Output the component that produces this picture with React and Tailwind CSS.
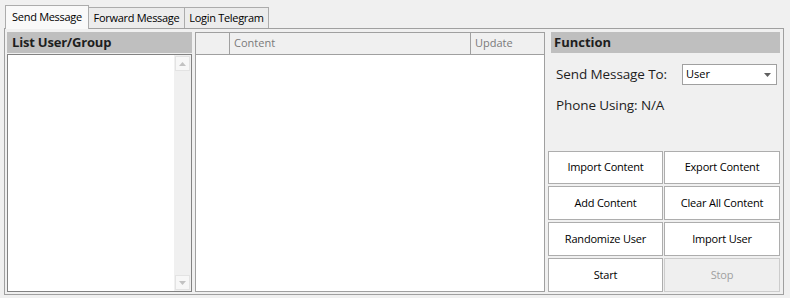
import React from "react";

const FONT = { fontFamily: '"Open Sans", "Noto Sans", sans-serif' };

function Btn({ children, disabled }) {
  return (
    <button
      disabled={disabled}
      className={
        disabled
          ? "border border-[#cccccc] bg-[#efefef] text-[#a0a0a0] text-[11px] tracking-[-0.2px]"
          : "border border-[#adadad] bg-white text-black text-[11px] tracking-[-0.2px]"
      }
    >
      {children}
    </button>
  );
}

function ScrollArrow({ up }) {
  return (
    <div className="h-[15px] w-[15px] border border-[#e3e3e3] bg-[#f7f7f7] flex items-center justify-center">
      <svg width="7" height="4" viewBox="0 0 7 4">
        {up ? <polygon points="0,4 7,4 3.5,0" fill="#c2c2c2" /> : <polygon points="0,0 7,0 3.5,4" fill="#c2c2c2" />}
      </svg>
    </div>
  );
}

export default function App() {
  return (
    <div className="w-[790px] h-[298px] bg-[#f0f0f0] overflow-hidden" style={FONT}>
      {/* tabs */}
      <div className="flex items-end pl-[5px] pt-[4px] h-[28px] text-[11px] tracking-[-0.3px] text-black">
        <div className="h-[24px] w-[84px] border border-b-0 border-[#acacac] bg-[#f9f9f9] flex items-center justify-center relative z-10 -mb-px pb-[1px]">
          Send Message
        </div>
        <div className="h-[21px] w-[96px] border border-b-0 border-l-0 border-[#acacac] bg-[#ececec] flex items-center justify-center">
          Forward Message
        </div>
        <div className="h-[21px] w-[84px] border border-b-0 border-l-0 border-[#acacac] bg-[#ececec] flex items-center justify-center">
          Login Telegram
        </div>
      </div>

      {/* tab page */}
      <div className="ml-[4px] w-[780px] h-[267px] border border-[#a0a0a0] flex gap-[3px] pl-[2px] pt-[3px]">
        {/* list user/group */}
        <div className="w-[185px] flex flex-col h-[260px]">
          <div className="h-[21px] bg-[#bfbfbf] flex items-center pl-[5px] text-[13px] font-bold text-[#1e1e1e] tracking-[-0.2px]">
            List User/Group
          </div>
          <div className="mt-[1px] flex-1 border border-[#828282] bg-white flex justify-end">
            <div className="w-[17px] bg-[#f0f0f0] flex flex-col justify-between items-center py-[1px]">
              <ScrollArrow up />
              <ScrollArrow />
            </div>
          </div>
        </div>

        {/* grid */}
        <div className="w-[350px] h-[260px] border border-[#a0a0a0] bg-white flex flex-col">
          <div className="h-[22px] flex border-b border-[#a0a0a0] bg-[#f0f0f0] text-[11px] text-[#7a7a7a]">
            <div className="w-[34px] border-r border-[#a0a0a0]" />
            <div className="w-[241px] border-r border-[#a0a0a0] flex items-center pl-[4px]">Content</div>
            <div className="flex-1 flex items-center pl-[4px]">Update</div>
          </div>
        </div>

        {/* function */}
        <div className="w-[232px] h-[260px] flex flex-col">
          <div className="ml-[3px] w-[229px] h-[21px] bg-[#bfbfbf] flex items-center pl-[3px] text-[13px] font-bold text-[#1e1e1e]">
            Function
          </div>
          <div className="flex items-center mt-[11px] pl-[8px]">
            <span className="text-[13.5px] text-[#1e1e1e] w-[126px] tracking-[-0.1px]">Send Message To:</span>
            <div className="w-[95px] h-[21px] border border-[#a0a0a0] bg-white flex items-center justify-between pl-[3px] pr-[5px] text-[11px]">
              <span>User</span>
              <svg width="7" height="4" viewBox="0 0 7 4">
                <polygon points="0,0 7,0 3.5,4" fill="#606060" />
              </svg>
            </div>
          </div>
          <div className="mt-[10px] pl-[8px] text-[13.5px] text-[#1e1e1e] tracking-[-0.1px]">Phone Using: N/A</div>
          <div className="flex-1" />
          <div className="grid grid-cols-[115px_116px] grid-rows-[33px_34px_34px_34px] gap-x-[1px] gap-y-[2px]">
            <Btn>Import Content</Btn>
            <Btn>Export Content</Btn>
            <Btn>Add Content</Btn>
            <Btn>Clear All Content</Btn>
            <Btn>Randomize User</Btn>
            <Btn>Import User</Btn>
            <Btn>Start</Btn>
            <Btn disabled>Stop</Btn>
          </div>
        </div>
      </div>
    </div>
  );
}
